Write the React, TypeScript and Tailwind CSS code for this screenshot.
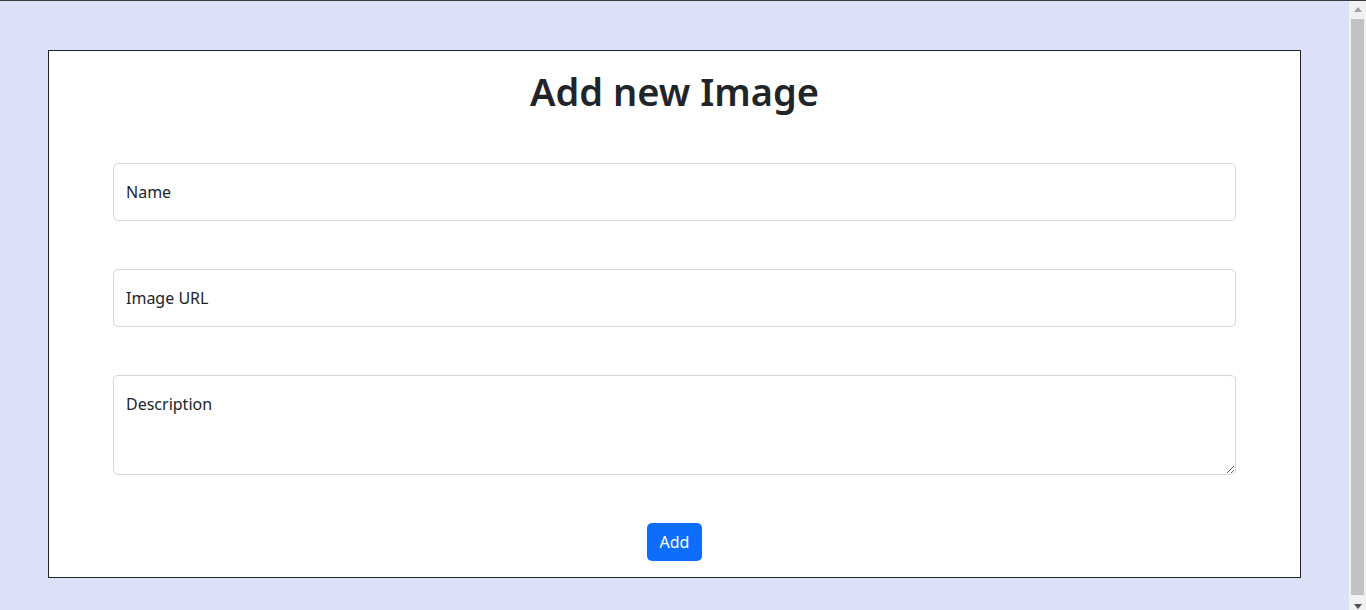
import React from "react";

export default function App() {
  return (
    <div className="h-[610px] w-[1366px] overflow-hidden flex flex-col bg-[#dde1f7]" style={{ fontFamily: '"Noto Sans", "Open Sans", sans-serif' }}>
      <div className="h-px w-full bg-[#3c3c3c] shrink-0" />
      <div className="flex flex-1 min-h-0">
        <div className="flex-1 pt-[49px] px-[48px]">
          <div className="h-[528px] border border-[#212529] bg-white px-16 pt-4 flex flex-col text-[#212529]">
            <h1 className="text-center text-[38px] leading-[48px] font-semibold mb-12">Add new Image</h1>
            <input
              className="h-[58px] w-full border border-[#d4d7db] rounded-[5px] px-3 text-base text-[#212529] placeholder:text-[#212529] outline-none mb-12"
              placeholder="Name"
            />
            <input
              className="h-[58px] w-full border border-[#d4d7db] rounded-[5px] px-3 text-base text-[#212529] placeholder:text-[#212529] outline-none mb-12"
              placeholder="Image URL"
            />
            <textarea
              className="h-[100px] w-full border border-[#d4d7db] rounded-[5px] px-3 pt-4 text-base leading-6 text-[#212529] placeholder:text-[#212529] outline-none mb-12 block"
              placeholder="Description"
            />
            <div className="flex justify-center">
              <button className="h-[38px] w-[55px] rounded-[5px] bg-[#0d6efd] text-white text-base leading-6">Add</button>
            </div>
          </div>
        </div>
        <div className="w-[17px] shrink-0 bg-[#f1f1f1] flex flex-col items-center">
          <div className="h-[17px] w-full flex items-center justify-center shrink-0">
            <svg width="8" height="5" viewBox="0 0 8 5"><path d="M4 0 L8 5 L0 5 Z" fill="#a3a3a3" /></svg>
          </div>
          <div className="w-[13px] h-[576px] bg-[#c1c1c1] mt-[1px]" />
          <div className="flex-1 w-full flex items-end justify-center pb-[1px]">
            <svg width="8" height="5" viewBox="0 0 8 5"><path d="M0 0 L8 0 L4 5 Z" fill="#505050" /></svg>
          </div>
        </div>
      </div>
    </div>
  );
}
